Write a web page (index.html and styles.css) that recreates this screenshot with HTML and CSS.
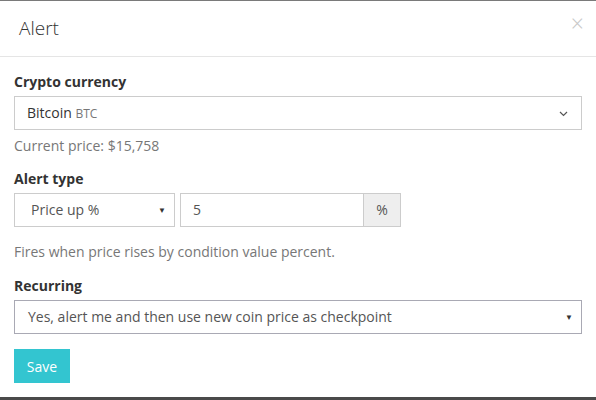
FILE: index.html
```html
<!DOCTYPE html>
<html>
<head>
<meta charset="utf-8">
<link rel="stylesheet" href="styles.css">
</head>
<body>
<div class="modal">
  <div class="modal-header">
    <h4 class="modal-title">Alert</h4>
    <span class="close">&times;</span>
  </div>
  <div class="modal-body">
    <div class="form-group">
      <label class="label">Crypto currency</label>
      <div class="select-box">
        <span class="coin">Bitcoin <small class="sym">BTC</small></span>
        <svg class="chev" width="9" height="6" viewBox="0 0 9 6"><path d="M1 1 L4.5 4.5 L8 1" fill="none" stroke="#555" stroke-width="1.2"/></svg>
      </div>
      <p class="help first">Current price: $15,758</p>
    </div>
    <div class="form-group">
      <label class="label">Alert type</label>
      <div class="row">
        <div class="native-select type-select"><span>Price up %</span><span class="caret">&#9660;</span></div>
        <div class="input-group">
          <div class="input">5</div>
          <div class="addon">%</div>
        </div>
      </div>
      <p class="help second">Fires when price rises by condition value percent.</p>
    </div>
    <div class="form-group">
      <label class="label">Recurring</label>
      <div class="native-select recurring"><span>Yes, alert me and then use new coin price as checkpoint</span><span class="caret">&#9660;</span></div>
    </div>
    <button class="btn">Save</button>
  </div>
</div>
</body>
</html>
```

FILE: styles.css
```css
* { box-sizing: border-box; }
html, body { margin: 0; padding: 0; background: #fff; }
body {
  font-family: "Open Sans", "Liberation Sans", sans-serif;
  font-size: 14px;
  line-height: 20px;
  color: #333;
}
.modal {
  width: 596px;
  height: 400px;
  border-top: 1px solid #7a7a7a;
  border-bottom: 3px solid #4a4a4a;
  display: flex;
  flex-direction: column;
}
.modal-header {
  height: 56px;
  border-bottom: 1px solid #e5e5e5;
  display: flex;
  align-items: flex-start;
  justify-content: space-between;
  padding: 14px 12px 0 19px;
}
.modal-title {
  margin: 0;
  font-size: 19px;
  font-weight: 300;
  line-height: 26px;
  color: #333;
}
.close {
  font-size: 23px;
  line-height: 16px;
  color: #c8c8c8;
  font-weight: 300;
}
.modal-body {
  padding: 15px 14px 0 14px;
  display: flex;
  flex-direction: column;
}
.form-group { display: flex; flex-direction: column; }
.label {
  font-weight: 700;
  margin-bottom: 4px;
  color: #333;
}
.select-box {
  height: 34px;
  border: 1px solid #ccc;
  display: flex;
  align-items: center;
  justify-content: space-between;
  padding: 0 13px 0 12px;
}
.coin { color: #333; }
.sym { font-size: 12px; color: #777; }
.chev { margin-top: 1px; }
.help { margin: 0; color: #777; }
.help.first { margin-top: 6px; margin-bottom: 13px; }
.help.second { margin-top: 15px; margin-bottom: 14px; }
.row { display: flex; gap: 5px; }
.native-select {
  height: 34px;
  border: 1px solid #ccc;
  display: flex;
  align-items: center;
  justify-content: space-between;
  padding: 0 8px 0 16px;
  color: #555;
}
.caret { font-size: 8px; color: #333; }
.type-select { width: 161px; }
.input-group { display: flex; width: 221px; }
.input {
  flex: 1;
  height: 34px;
  border: 1px solid #ccc;
  border-right: none;
  padding: 0 12px;
  display: flex;
  align-items: center;
  color: #555;
}
.addon {
  width: 38px;
  height: 34px;
  border: 1px solid #ccc;
  background: #eee;
  display: flex;
  align-items: center;
  justify-content: center;
  color: #555;
}
.recurring {
  border-color: #a9a9b4;
  padding-left: 13px;
  padding-right: 8px;
}
.btn {
  margin-top: 15px;
  align-self: flex-start;
  width: 56px;
  height: 34px;
  border: none;
  background: #33c5d0;
  color: #fff;
  font-family: inherit;
  font-size: 14px;
  padding: 0;
}
```
